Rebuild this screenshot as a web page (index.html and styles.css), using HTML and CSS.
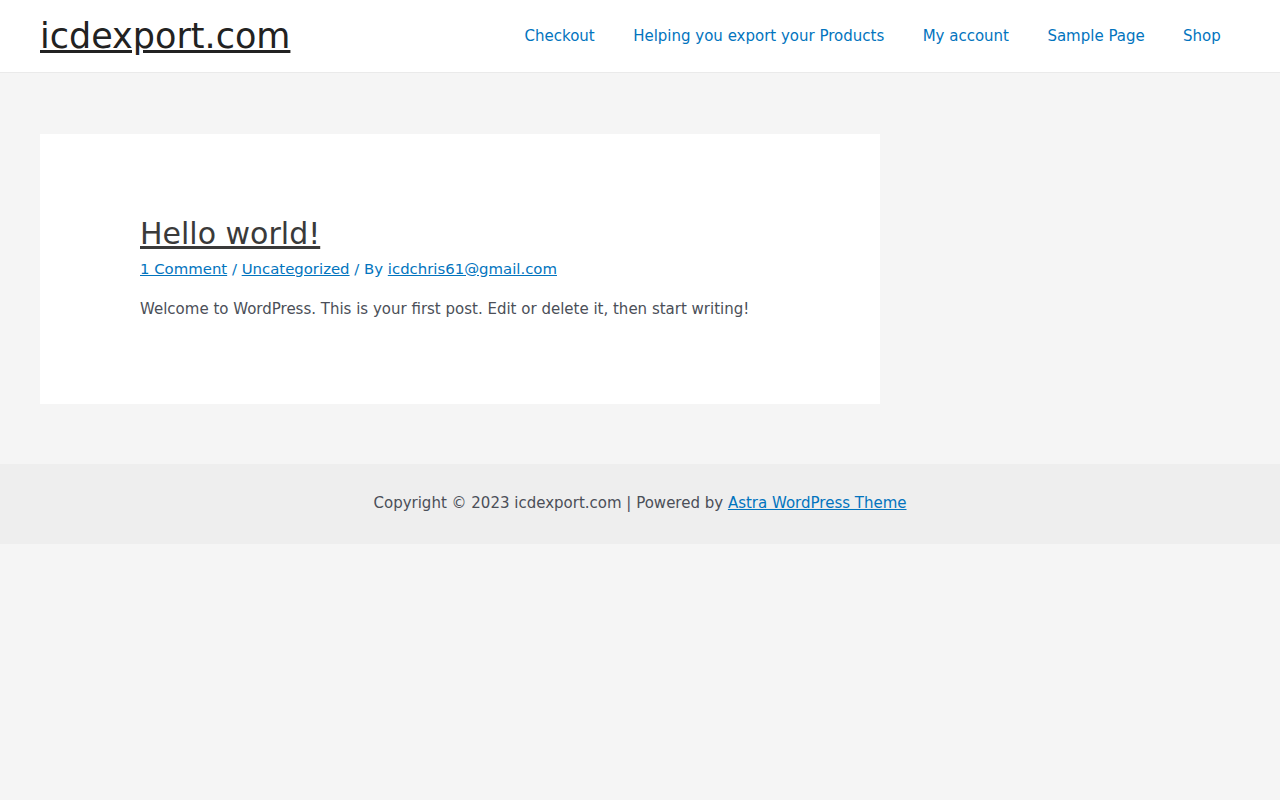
FILE: index.html
```html
<!DOCTYPE html>
<html lang="en">
<head>
<meta charset="utf-8">
<title>icdexport.com</title>
<link rel="stylesheet" href="styles.css">
</head>
<body>
<header class="site-header">
  <div class="header-inner">
    <a class="site-title" href="#">icdexport.com</a>
    <nav class="main-nav">
      <a href="#">Checkout</a>
      <a href="#">Helping you export your Products</a>
      <a href="#">My account</a>
      <a href="#">Sample Page</a>
      <a href="#">Shop</a>
    </nav>
  </div>
</header>
<main class="site-content">
  <div class="container">
    <article class="post">
      <h2 class="entry-title"><a href="#">Hello world!</a></h2>
      <div class="entry-meta"><a href="#">1 Comment</a> / <a href="#">Uncategorized</a> / By <a href="#">icdchris61@gmail.com</a></div>
      <p class="entry-content">Welcome to WordPress. This is your first post. Edit or delete it, then start writing!</p>
    </article>
  </div>
</main>
<footer class="site-footer">
  <div class="footer-inner">Copyright © 2023 icdexport.com | Powered by <a href="#">Astra WordPress Theme</a></div>
</footer>
</body>
</html>
```
FILE: styles.css
```css
* { box-sizing: border-box; }
html, body { margin: 0; padding: 0; }
body {
  background: #f5f5f5;
  font-family: "DejaVu Sans", sans-serif;
  font-size: 15px;
  line-height: 1.85;
  color: #3a3a3a;
}
a { color: #0274be; }
.site-header {
  background: #fff;
  border-bottom: 1px solid #eaeaea;
}
.header-inner {
  height: 72px;
  padding: 0 40px;
  display: flex;
  align-items: center;
  justify-content: space-between;
}
.site-title {
  font-size: 35px;
  line-height: 1.2;
  color: #222;
  text-decoration: underline;
}
.main-nav {
  display: flex;
  align-items: center;
}
.main-nav a {
  text-decoration: none;
  padding: 0 19.2px;
  line-height: 72px;
  font-size: 15px;
}
.site-content {
  padding: 61px 40px 60px;
}
.container {
  width: 840px;
}
.post {
  background: #fff;
  padding: 80px 100px 83px;
}
.entry-title {
  margin: 0;
  font-size: 30px;
  font-weight: normal;
  line-height: 1.35;
}
.entry-title a { color: #3a3a3a; }
.entry-meta {
  font-size: 14.9px;
  color: #0274be;
  line-height: 1.6;
  margin-top: 3px;
}
.entry-content {
  margin: 16px 0 0;
  font-size: 15px;
  line-height: 1.6;
  color: #4b4f58;
}
.site-footer {
  background: #eeeeee;
}
.footer-inner {
  height: 80px;
  display: flex;
  align-items: center;
  justify-content: center;
  font-size: 15px;
  color: #4b4f58;
  white-space: pre;
}
```
